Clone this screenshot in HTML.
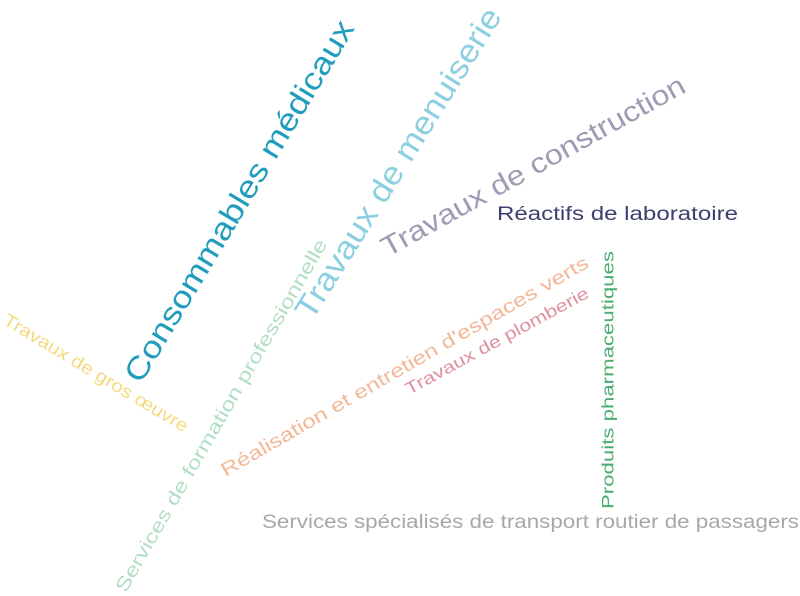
<!DOCTYPE html>
<html><head><meta charset="utf-8"><style>
html,body{margin:0;padding:0;background:#fff;width:800px;height:596px;overflow:hidden}
svg{display:block}
text{font-family:"Liberation Sans",sans-serif;}
</style></head><body>
<svg width="800" height="596" viewBox="0 0 800 596" xmlns="http://www.w3.org/2000/svg">
<g text-anchor="middle" dominant-baseline="central">
<text transform="translate(239,201) rotate(-59)" font-size="31" fill="#1f9dbb" textLength="416" lengthAdjust="spacingAndGlyphs">Consommables médicaux</text>
<text transform="translate(398,163) rotate(-58)" font-size="32" fill="#8ccfe0" textLength="360" lengthAdjust="spacingAndGlyphs">Travaux de menuiserie</text>
<text transform="translate(533,166) rotate(-29)" font-size="28" fill="#9d9cb4" textLength="343" lengthAdjust="spacingAndGlyphs">Travaux de construction</text>
<text transform="translate(96,373) rotate(31)" font-size="18" fill="#f6d97f" textLength="212" lengthAdjust="spacingAndGlyphs">Travaux de gros œuvre</text>
<text transform="translate(222,416) rotate(-60)" font-size="19" fill="#b2dfc4" textLength="404" lengthAdjust="spacingAndGlyphs">Services de formation professionnelle</text>
<text transform="translate(405,367) rotate(-30)" font-size="19" fill="#f3b799" textLength="421" lengthAdjust="spacingAndGlyphs">Réalisation et entretien d'espaces verts</text>
<text transform="translate(497,341) rotate(-28.5)" font-size="17" fill="#e0919f" textLength="206" lengthAdjust="spacingAndGlyphs">Travaux de plomberie</text>
<text transform="translate(608,380) rotate(-90)" font-size="17" fill="#4bac72" textLength="258" lengthAdjust="spacingAndGlyphs">Produits pharmaceutiques</text>
</g>
<text x="497" y="220" font-size="19" fill="#3b4070" textLength="241" lengthAdjust="spacingAndGlyphs">Réactifs de laboratoire</text>
<text x="262" y="528" font-size="19" fill="#a8a8a8" textLength="537" lengthAdjust="spacingAndGlyphs">Services spécialisés de transport routier de passagers</text>
</svg>
</body></html>
